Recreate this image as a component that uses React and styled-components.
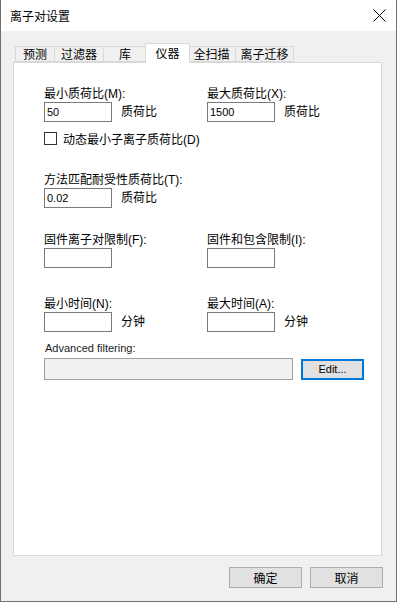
import React from 'react'
import styled, { createGlobalStyle } from 'styled-components'

const GlobalStyle = createGlobalStyle`
  html, body {
    margin: 0;
    padding: 0;
    background: #ffffff;
  }
  * {
    box-sizing: border-box;
  }
`

const font = `"Liberation Sans", "Noto Sans CJK SC", sans-serif`

const WindowStyled = styled.div`
  width: 397px;
  height: 602px;
  display: flex;
  flex-direction: column;
  border: 1px solid #707070;
  border-top: none;
  font-family: ${font};
  font-size: 12px;
  color: #000000;
  background: #f0f0f0;
`
const TitleBar = styled.div`
  height: 31px;
  flex: none;
  display: flex;
  align-items: center;
  justify-content: space-between;
  padding: 0 9px 1px 9px;
  background: #ffffff;
`
const CloseButton = styled.div`
  width: 14px;
  height: 14px;
  margin-right: 1px;
  display: flex;
  align-items: center;
  justify-content: center;
`
const Body = styled.div`
  flex: 1;
  display: flex;
  flex-direction: column;
  padding: 12px 14px 0 12px;
`
const TabStrip = styled.div`
  height: 19px;
  display: flex;
  align-items: flex-end;
  padding-left: 2px;
  position: relative;
  z-index: 1;
`
const Tab = styled.div`
  width: ${(p) => p.w}px;
  height: ${(p) => (p.active ? 20 : 16)}px;
  margin: 0 ${(p) => (p.active ? -2 : 0)}px ${(p) => (p.active ? -1 : 0)}px;
  padding-top: ${(p) => (p.active ? 0 : 1)}px;
  display: flex;
  align-items: center;
  justify-content: center;
  border: 1px solid #d9d9d9;
  border-bottom: ${(p) => (p.active ? 'none' : '1px solid #d9d9d9')};
  border-left-width: ${(p) => (p.first || p.active ? 1 : 0)}px;
  background: ${(p) => (p.active ? '#ffffff' : '#f0f0f0')};
  position: relative;
  z-index: ${(p) => (p.active ? 2 : 1)};
  line-height: 14px;
  white-space: nowrap;
`
const Panel = styled.div`
  height: 494px;
  background: #ffffff;
  border: 1px solid #d9d9d9;
  padding: 24px 0 0 30px;
  display: flex;
  flex-direction: column;
`
const FieldRow = styled.div`
  display: flex;
  margin-top: ${(p) => p.mt || 0}px;
`
const Field = styled.div`
  width: ${(p) => p.w || 163}px;
  display: flex;
  flex-direction: column;
`
const Label = styled.div`
  line-height: 15px;
  height: 15px;
  white-space: nowrap;
`
const InputGroup = styled.div`
  display: flex;
  align-items: center;
`
const TextInput = styled.div`
  width: 68px;
  height: 20px;
  border: 1px solid #7a7a7a;
  background: #ffffff;
  padding-left: 2px;
  font-family: "Liberation Sans", sans-serif;
  font-size: 11px;
  line-height: 18px;
`
const Unit = styled.span`
  margin-left: 9px;
  line-height: 15px;
`
const CheckRow = styled.div`
  display: flex;
  align-items: center;
  height: 15px;
  margin-top: 9px;
`
const CheckBox = styled.div`
  width: 13px;
  height: 13px;
  border: 1px solid #333333;
  background: #ffffff;
  margin-right: 6px;
`
const SmallLabel = styled.div`
  font-family: "Liberation Sans", sans-serif;
  font-size: 11px;
  line-height: 13px;
  margin-top: 10px;
  padding-left: 1px;
  color: #1a1a1a;
`
const FilterRow = styled.div`
  display: flex;
  align-items: center;
  gap: 8px;
  margin-top: 3px;
`
const DisabledBox = styled.div`
  width: 249px;
  height: 22px;
  background: #f0f0f0;
  border: 1px solid #a0a0a0;
`
const Button = styled.div`
  width: ${(p) => p.w}px;
  height: ${(p) => p.h || 21}px;
  display: flex;
  align-items: center;
  justify-content: center;
  background: #e1e1e1;
  border: ${(p) => (p.focused ? '2px solid #0078d7' : '1px solid #adadad')};
  font-family: ${(p) => (p.latin ? '"Liberation Sans", sans-serif' : font)};
  font-size: ${(p) => (p.latin ? 11 : 12)}px;
`
const Footer = styled.div`
  display: flex;
  justify-content: flex-end;
  gap: 8px;
  margin: 11px -1px 0 0;
`

const tabs = [
  { label: '预测', w: 40 },
  { label: '过滤器', w: 49 },
  { label: '库', w: 43 },
  { label: '仪器', w: 45, active: true },
  { label: '全扫描', w: 48 },
  { label: '离子迁移', w: 58 },
]

const InputField = ({ label, value, unit }) => (
  <Field>
    <Label>{label}</Label>
    <InputGroup>
      <TextInput>{value}</TextInput>
      {unit && <Unit>{unit}</Unit>}
    </InputGroup>
  </Field>
)

export default function App() {
  return (
    <React.Fragment>
      <GlobalStyle />
      <WindowStyled>
        <TitleBar>
          <span>离子对设置</span>
          <CloseButton>
            <svg width="13" height="13" viewBox="0 0 13 13">
              <path d="M0.5 0.5 L12.5 12.5 M12.5 0.5 L0.5 12.5" stroke="#000" strokeWidth="1" fill="none" />
            </svg>
          </CloseButton>
        </TitleBar>
        <Body>
          <TabStrip>
            {tabs.map((tab, index) => (
              <Tab key={index} w={tab.w} active={tab.active} first={index === 0}>
                {tab.label}
              </Tab>
            ))}
          </TabStrip>
          <Panel>
            <FieldRow>
              <InputField label="最小质荷比(M):" value="50" unit="质荷比" />
              <InputField label="最大质荷比(X):" value="1500" unit="质荷比" />
            </FieldRow>
            <CheckRow>
              <CheckBox />
              <span>动态最小子离子质荷比(D)</span>
            </CheckRow>
            <FieldRow mt={27}>
              <InputField label="方法匹配耐受性质荷比(T):" value="0.02" unit="质荷比" />
            </FieldRow>
            <FieldRow mt={25}>
              <InputField label="固件离子对限制(F):" />
              <InputField label="固件和包含限制(I):" />
            </FieldRow>
            <FieldRow mt={29}>
              <InputField label="最小时间(N):" unit="分钟" />
              <InputField label="最大时间(A):" unit="分钟" />
            </FieldRow>
            <SmallLabel>Advanced filtering:</SmallLabel>
            <FilterRow>
              <DisabledBox />
              <Button w={63} focused latin>
                Edit...
              </Button>
            </FilterRow>
          </Panel>
          <Footer>
            <Button w={73}>确定</Button>
            <Button w={73}>取消</Button>
          </Footer>
        </Body>
      </WindowStyled>
    </React.Fragment>
  )
}
